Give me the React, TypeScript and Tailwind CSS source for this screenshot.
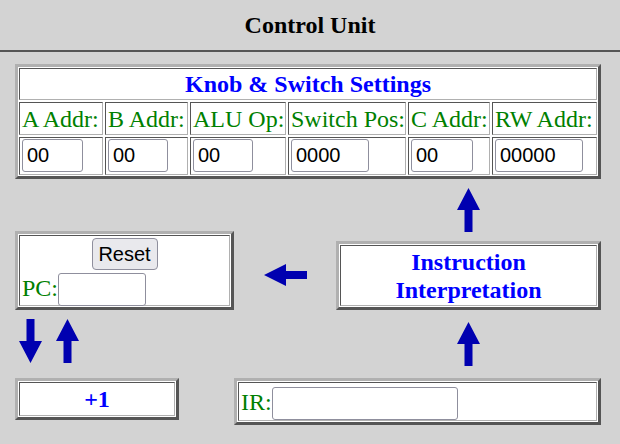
import React from "react";

const serif = "font-[family-name:'Liberation_Serif',serif]";
const sans = "font-[family-name:'Liberation_Sans',Arial,sans-serif]";

const outset =
  "border-[3px] border-t-[#b0b0b0] border-l-[#b0b0b0] border-r-[#555] border-b-[#555] bg-white p-[1px]";
const inset =
  "border border-t-[#555] border-l-[#555] border-r-[#b0b0b0] border-b-[#b0b0b0] bg-white";

function Arrow({ dir }: { dir: "up" | "down" | "left" }) {
  if (dir === "left") {
    return (
      <svg width="43" height="22" viewBox="0 0 43 22" className="block">
        <path d="M0 11 L22 0 L22 7 L43 7 L43 15 L22 15 L22 22 Z" fill="#0000b0" />
      </svg>
    );
  }
  const d =
    dir === "up"
      ? "M11.5 0 L23 22 L15.5 22 L15.5 44 L7.5 44 L7.5 22 L0 22 Z"
      : "M7.5 0 L15.5 0 L15.5 22 L23 22 L11.5 44 L0 22 L7.5 22 Z";
  return (
    <svg width="23" height="44" viewBox="0 0 23 44" className="block">
      <path d={d} fill="#0000b0" />
    </svg>
  );
}

function TextBox({ value, w }: { value: string; w: number }) {
  return (
    <input
      readOnly
      value={value}
      style={{ width: w }}
      className={`${sans} h-[33px] rounded-[3px] border border-[#8f8f9d] bg-white px-[4px] text-[20px] text-black outline-none`}
    />
  );
}

const knobs = [
  { label: "A Addr:", value: "00", w: 61 },
  { label: "B Addr:", value: "00", w: 60 },
  { label: "ALU Op:", value: "00", w: 60 },
  { label: "Switch Pos:", value: "0000", w: 78 },
  { label: "C Addr:", value: "00", w: 62 },
  { label: "RW Addr:", value: "00000", w: 88 },
];

export default function App() {
  return (
    <div className={`${serif} w-[620px] h-[444px] overflow-hidden bg-[#d3d3d3] text-black`}>
      {/* header */}
      <div className="h-[50px] flex items-center justify-center pb-[1px]">
        <h1 className="text-[24px] font-bold leading-none">Control Unit</h1>
      </div>
      <div className="h-[2px] bg-[#555]" />

      {/* knob & switch settings */}
      <div className={`${outset} ml-[15px] mt-[12px] w-[586px]`}>
        <div className="grid grid-cols-[84px_83px_96px_118px_82px_105px] grid-rows-[32px_33px_38px] gap-[2px]">
          <div className={`${inset} col-span-6 flex items-center justify-center text-[24px] font-bold text-[#0000ff]`}>
            Knob &amp; Switch Settings
          </div>
          {knobs.map((k) => (
            <div key={k.label} className={`${inset} flex items-center px-[2px] text-[24px] text-[#008000] whitespace-nowrap`}>
              {k.label}
            </div>
          ))}
          {knobs.map((k) => (
            <div key={k.label + "-in"} className={`${inset} flex items-start pl-[2px] pt-[1px]`}>
              <TextBox value={k.value} w={k.w} />
            </div>
          ))}
        </div>
      </div>

      {/* PC / interpretation row */}
      <div className="flex items-end pl-[15px]">
        <div className={`${outset} w-[219px] h-[79px]`}>
          <div className={`${inset} h-full flex flex-col px-[2px] pt-[2px]`}>
            <button
              className={`${sans} self-center h-[32px] w-[66px] rounded-[4px] border border-[#8f8f9d] bg-[#e9e9ed] text-[20px] text-black`}
            >
              Reset
            </button>
            <div className="flex items-baseline">
              <span className="text-[24px] text-[#008000]">PC:</span>
              <TextBox value="" w={88} />
            </div>
          </div>
        </div>
        <div className="w-[102px] pl-[30px] mb-[24px]">
          <Arrow dir="left" />
        </div>
        <div className="w-[265px] flex flex-col items-center">
          <div className="mt-[9px]">
            <Arrow dir="up" />
          </div>
          <div className={`${outset} mt-[9px] w-full h-[69px]`}>
            <div className={`${inset} h-full flex flex-col items-center justify-center text-[24px] leading-[28px] font-bold text-[#0000ff]`}>
              <span>Instruction</span>
              <span>Interpretation</span>
            </div>
          </div>
        </div>
      </div>

      {/* +1 / IR row */}
      <div className="flex pl-[15px]">
        <div className="w-[219px]">
          <div className="flex items-end mt-[8px] pl-[4px] h-[45px]">
            <Arrow dir="down" />
            <div className="ml-[14px]">
              <Arrow dir="up" />
            </div>
          </div>
          <div className={`${outset} mt-[15px] w-[164px] h-[42px]`}>
            <div className={`${inset} h-full flex items-center justify-center text-[24px] font-bold text-[#0000ff]`}>
              +1
            </div>
          </div>
        </div>
        <div className="w-[367px]">
          <div className="mt-[12px] ml-[223px]">
            <Arrow dir="up" />
          </div>
          <div className={`${outset} mt-[12px] w-full h-[47px]`}>
            <div className={`${inset} h-full flex items-center px-[2px]`}>
              <div className="flex items-baseline">
                <span className="text-[24px] text-[#008000]">IR:</span>
                <TextBox value="" w={186} />
              </div>
            </div>
          </div>
        </div>
      </div>
    </div>
  );
}
